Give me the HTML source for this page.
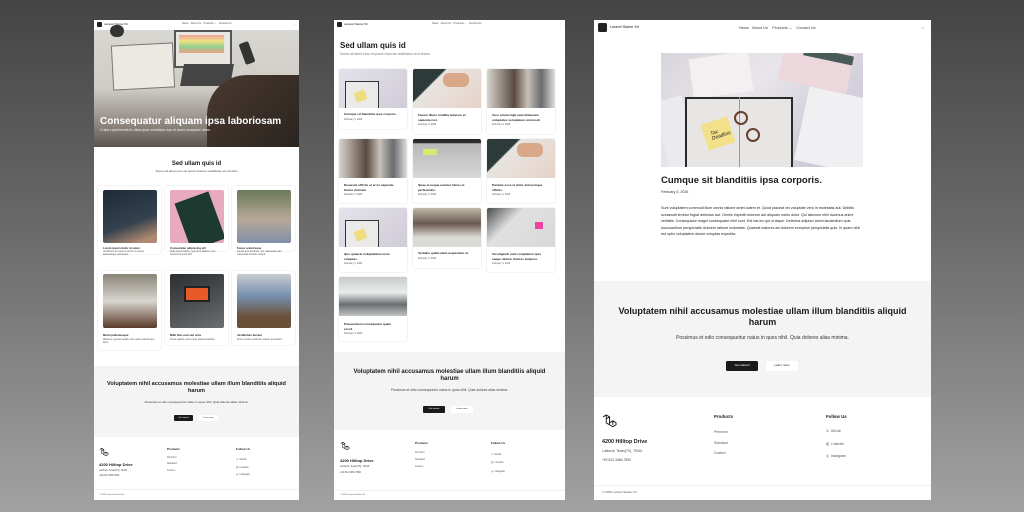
<!DOCTYPE html>
<html><head><meta charset="utf-8">
<style>
*{margin:0;padding:0;box-sizing:border-box}
body{width:1024px;height:512px;overflow:hidden;background:linear-gradient(#444 0%,#6a6a6a 45%,#a2a2a2 100%);font-family:"Liberation Sans",sans-serif;color:#1a1a1a;position:relative}
.a{position:absolute}
.p{position:absolute;background:#fff;overflow:hidden}
.t{position:absolute;white-space:nowrap;line-height:1}
.b{font-weight:bold}
.card{position:absolute;background:#fff;border-radius:2px;box-shadow:0 0 1.5px rgba(0,0,0,.18)}
.g{background:#f4f4f4}
</style></head><body>

<!-- PANEL 1 -->
<div class="p" style="left:94px;top:20px;width:205px;height:480px">
  <div class="a" style="left:3px;top:2px;width:5px;height:5px;background:#222;border-radius:1px"></div>
  <div class="t" style="left:10px;top:3px;font-size:3px">Laravel Starter Kit</div>
  <div class="t" style="left:88px;top:3px;font-size:2.6px;color:#555">News&nbsp;&nbsp;&nbsp;About Us&nbsp;&nbsp;&nbsp;Products ⌄&nbsp;&nbsp;&nbsp;Contact Us</div>
  <div class="t" style="left:199px;top:3px;font-size:3px;color:#777">☼</div>
  <!-- hero -->
  <div class="a" style="left:0;top:10px;width:205px;height:117px;background:linear-gradient(180deg,#d9d7d2 0%,#cfccc6 50%,#8f8880 80%,#5a544e 100%)"></div>
  <div class="a" style="left:18px;top:24px;width:62px;height:45px;background:#ece9e2;border:1px solid #777;transform:rotate(-3deg)"></div>
  <div class="a" style="left:80px;top:10px;width:58px;height:38px;background:#e8e6e0;border:2px solid #555"></div>
  <div class="a" style="left:85px;top:15px;width:45px;height:18px;background:linear-gradient(#f0a0a0,#f0e080,#90d090,#f0a080)"></div>
  <div class="a" style="left:88px;top:44px;width:50px;height:22px;background:#444;transform:skewX(-10deg)"></div>
  <div class="a" style="left:113px;top:55px;width:92px;height:72px;background:linear-gradient(135deg,#4a3a30,#2a2420);border-radius:40px 0 0 0"></div>
  <div class="a" style="left:148px;top:22px;width:10px;height:22px;background:#333;border-radius:2px;transform:rotate(-20deg)"></div>
  <div class="a" style="left:16px;top:5px;width:14px;height:12px;background:#333;border-radius:6px"></div>
  <div class="t b" style="left:6px;top:97px;font-size:10px;color:#fff">Consequatur aliquam ipsa laboriosam</div>
  <div class="t" style="left:6px;top:109px;font-size:3.6px;color:#eee">Culpa reprehenderit, dicta ipsa molestias eos et amet excepturi ullam.</div>
  <div class="t b" style="left:0;width:205px;text-align:center;top:141px;font-size:6px">Sed ullam quis id</div>
  <div class="t" style="left:0;width:205px;text-align:center;top:150px;font-size:3px;color:#444">Donec sit amet eros vel purus rhoncus vestibulum et ut lectus</div>
  <!-- cards row1 -->
  <div class="card" style="left:4px;top:166px;width:63px;height:68px"></div>
  <div class="card" style="left:71px;top:166px;width:63px;height:65px"></div>
  <div class="card" style="left:138px;top:166px;width:63px;height:65px"></div>
  <div class="a" style="left:9px;top:170px;width:54px;height:53px;border-radius:2px;background:linear-gradient(160deg,#1e2a38,#34414e 60%,#b08a70 90%)"></div>
  <div class="a" style="left:76px;top:170px;width:54px;height:53px;border-radius:2px;background:#e8aac0;overflow:hidden"><div class="a" style="left:12px;top:6px;width:36px;height:50px;background:#1c3a30;transform:rotate(-20deg)"></div></div>
  <div class="a" style="left:143px;top:170px;width:54px;height:53px;border-radius:2px;background:linear-gradient(180deg,#6a7a58,#b8a898 55%,#8090a8)"></div>
  <div class="t b" style="left:9px;top:227px;font-size:2.8px">Lorem ipsum dolor sit amet</div>
  <div class="t" style="left:9px;top:231px;font-size:2.3px;color:#555;line-height:1.3;white-space:normal;width:54px">Vestibulum at maximus lectus ut semper pellentesque scelerisque</div>
  <div class="t b" style="left:76px;top:227px;font-size:2.8px">Consectetur adipiscing elit</div>
  <div class="t" style="left:76px;top:231px;font-size:2.3px;color:#555;line-height:1.3;white-space:normal;width:54px">Nulla cursus sapien, sed elit et dapibus nunc euismod at porta nibh</div>
  <div class="t b" style="left:143px;top:227px;font-size:2.8px">Fusce scelerisque</div>
  <div class="t" style="left:143px;top:231px;font-size:2.3px;color:#555;line-height:1.3;white-space:normal;width:54px">Lacinia eros hendrerit, non malesuada justo malesuada tincidunt magna</div>
  <!-- cards row2 -->
  <div class="card" style="left:4px;top:251px;width:63px;height:79px"></div>
  <div class="card" style="left:71px;top:251px;width:63px;height:74px"></div>
  <div class="card" style="left:138px;top:251px;width:63px;height:74px"></div>
  <div class="a" style="left:9px;top:254px;width:54px;height:54px;border-radius:2px;background:linear-gradient(180deg,#8a8478,#d8d6d0 50%,#5a3a28)"></div>
  <div class="a" style="left:76px;top:254px;width:54px;height:54px;border-radius:2px;background:linear-gradient(160deg,#2a2e30,#6a6e70)"><div class="a" style="left:14px;top:12px;width:26px;height:16px;background:#e85a28;border:2px solid #222"></div></div>
  <div class="a" style="left:143px;top:254px;width:54px;height:54px;border-radius:2px;background:linear-gradient(180deg,#c8ccd0,#7890b0 40%,#6a5038 80%)"></div>
  <div class="t b" style="left:9px;top:314px;font-size:2.8px">Morbi pellentesque</div>
  <div class="t" style="left:9px;top:319px;font-size:2.3px;color:#555;line-height:1.3;white-space:normal;width:54px">Massa et egestas sagittis, arcu quam pellentesque lacus</div>
  <div class="t b" style="left:76px;top:314px;font-size:2.8px">Nibh felis erat sed urna</div>
  <div class="t" style="left:76px;top:319px;font-size:2.3px;color:#555">Fusce sagittis erat sit amet placerat dapibus</div>
  <div class="t b" style="left:143px;top:314px;font-size:2.8px">Vestibulum laoreet</div>
  <div class="t" style="left:143px;top:319px;font-size:2.3px;color:#555">Donec ornare vestibulum sapien at interdum</div>
  <!-- CTA -->
  <div class="a g" style="left:0;top:346px;width:205px;height:71px"></div>
  <div class="t b" style="left:0;width:205px;text-align:center;top:361px;font-size:5.6px;white-space:normal;line-height:1.2">Voluptatem nihil accusamus molestiae ullam illum blanditiis aliquid<br>harum</div>
  <div class="t" style="left:0;width:205px;text-align:center;top:381px;font-size:3px;color:#333">Possimus et odio consequuntur natus in quos nihil. Quia dolores alias minima.</div>
  <div class="a" style="left:80px;top:395px;width:19px;height:6px;background:#1a1a1a;border-radius:1px"></div>
  <div class="t" style="left:80px;width:19px;text-align:center;top:397px;font-size:2px;color:#fff">Get started</div>
  <div class="a" style="left:105px;top:395px;width:19px;height:6px;background:#fff;border-radius:1px"></div>
  <div class="t" style="left:105px;width:19px;text-align:center;top:397px;font-size:2px">Learn more</div>
  <!-- footer -->
  <svg class="a" style="left:5px;top:427px" width="11" height="11" viewBox="0 0 50 52" fill="none" stroke="#222" stroke-width="3"><path d="M2 12L12 6l10 6v24l10 6 10-6V30l-10-6-10 6M12 6v24l10 6M22 12l-10 6M32 24v12M42 30l-10-6"/></svg>
  <div class="t b" style="left:5px;top:443px;font-size:4px">4200 Hilltop Drive</div>
  <div class="t" style="left:5px;top:450px;font-size:2.3px;color:#444">Lubbock, Texas(TX), 79410</div>
  <div class="t" style="left:5px;top:455px;font-size:2.3px;color:#444">+92 812-3466-7890</div>
  <div class="t b" style="left:73px;top:428px;font-size:3px">Products</div>
  <div class="t" style="left:73px;top:435px;font-size:2.4px;color:#555;line-height:2.7">Premium<br>Standard<br>Custom</div>
  <div class="t b" style="left:142px;top:428px;font-size:3px">Follow Us</div>
  <div class="t" style="left:142px;top:436px;font-size:2.4px;color:#555;line-height:3.2">⊙&nbsp; GitLab<br>▥&nbsp; LinkedIn<br>◎&nbsp; Instagram</div>
  <div class="a" style="left:0;top:469px;width:205px;height:1px;background:#f0f0f0"></div>
  <div class="t" style="left:5px;top:474px;font-size:2.2px;color:#555">© 2026 Laravel Starter Kit</div>
</div>

<!-- PANEL 2 -->
<div class="p" style="left:334px;top:20px;width:231px;height:480px">
  <div class="a" style="left:3px;top:2px;width:5px;height:5px;background:#222;border-radius:1px"></div>
  <div class="t" style="left:10px;top:3px;font-size:3px">Laravel Starter Kit</div>
  <div class="t" style="left:98px;top:3px;font-size:2.6px;color:#555">News&nbsp;&nbsp;&nbsp;About Us&nbsp;&nbsp;&nbsp;Products ⌄&nbsp;&nbsp;&nbsp;Contact Us</div>
  <div class="t" style="left:225px;top:3px;font-size:3px;color:#777">☼</div>
  <div class="t b" style="left:6px;top:22px;font-size:8px">Sed ullam quis id</div>
  <div class="t" style="left:6px;top:33px;font-size:3.3px;color:#777">Donec sit amet eros vel purus rhoncus vestibulum et ut lectus.</div>
  <div class="card" style="left:5px;top:49px;width:68px;height:60px"></div>
  <div class="card" style="left:79px;top:49px;width:68px;height:65px"></div>
  <div class="card" style="left:153px;top:49px;width:68px;height:65px"></div>
  <div class="card" style="left:5px;top:119px;width:68px;height:64px"></div>
  <div class="card" style="left:79px;top:119px;width:68px;height:64px"></div>
  <div class="card" style="left:153px;top:119px;width:68px;height:64px"></div>
  <div class="card" style="left:5px;top:188px;width:68px;height:64px"></div>
  <div class="card" style="left:79px;top:188px;width:68px;height:60px"></div>
  <div class="card" style="left:153px;top:188px;width:68px;height:64px"></div>
  <div class="card" style="left:5px;top:257px;width:68px;height:64px"></div>

  <div class="a" style="left:5px;top:49px;width:68px;height:39px;border-radius:2px 2px 0 0;background:linear-gradient(135deg,#e4e2ea,#d0ccd8);overflow:hidden"><div class="a" style="left:6px;top:12px;width:34px;height:28px;border:1.5px solid #333;background:#eceae8"></div><div class="a" style="left:16px;top:22px;width:11px;height:10px;background:#f0dc80;transform:rotate(-20deg)"></div></div>
  <div class="a" style="left:79px;top:49px;width:68px;height:39px;border-radius:2px 2px 0 0;background:linear-gradient(135deg,#2c3a3a 0%,#2c3a3a 30%,#e8e4e0 32%,#e6d2c8 100%)"><div class="a" style="left:30px;top:4px;width:26px;height:14px;background:#d8a888;border-radius:6px"></div></div>
  <div class="a" style="left:153px;top:49px;width:68px;height:39px;border-radius:2px 2px 0 0;background:linear-gradient(90deg,#d8d4ce,#5a4a40 40%,#c8c0b8 60%,#6a6a70 80%,#e0e0e0)"></div>

  <div class="a" style="left:5px;top:119px;width:68px;height:39px;border-radius:2px 2px 0 0;background:linear-gradient(90deg,#d8d4ce,#5a4a40 40%,#c8c0b8 60%,#6a6a70 80%,#e0e0e0)"></div>
  <div class="a" style="left:79px;top:119px;width:68px;height:39px;border-radius:2px 2px 0 0;background:linear-gradient(180deg,#222 0%,#333 10%,#b8b8b8 12%,#d8d8d8 100%)"><div class="a" style="left:10px;top:10px;width:14px;height:6px;background:#d8e870"></div></div>
  <div class="a" style="left:153px;top:119px;width:68px;height:39px;border-radius:2px 2px 0 0;background:linear-gradient(135deg,#2c3a3a 0%,#2c3a3a 30%,#e8e4e0 32%,#e6d2c8 100%)"><div class="a" style="left:30px;top:4px;width:26px;height:14px;background:#d8a888;border-radius:6px"></div></div>

  <div class="a" style="left:5px;top:188px;width:68px;height:39px;border-radius:2px 2px 0 0;background:linear-gradient(135deg,#e4e2ea,#d0ccd8);overflow:hidden"><div class="a" style="left:6px;top:12px;width:34px;height:28px;border:1.5px solid #333;background:#eceae8"></div><div class="a" style="left:16px;top:22px;width:11px;height:10px;background:#f0dc80;transform:rotate(-20deg)"></div></div>
  <div class="a" style="left:79px;top:188px;width:68px;height:39px;border-radius:2px 2px 0 0;background:linear-gradient(180deg,#c0b8a8,#6a5a50 40%,#dcdad4 75%)"></div>
  <div class="a" style="left:153px;top:188px;width:68px;height:39px;border-radius:2px 2px 0 0;background:linear-gradient(135deg,#4a4a4a,#e0e0e0 35%,#d8d8d8)"><div class="a" style="left:48px;top:14px;width:8px;height:7px;background:#f040a0"></div></div>

  <div class="a" style="left:5px;top:257px;width:68px;height:39px;border-radius:2px 2px 0 0;background:linear-gradient(180deg,#c8ccc8,#e8ecec 40%,#6a6e70 70%,#c0c4c4)"></div>

  <div class="t b" style="left:10px;top:93px;font-size:3.1px">Cumque sit blanditiis ipsa corporis.</div>
  <div class="t" style="left:10px;top:99px;font-size:2.4px;color:#555">February 3, 2026</div>
  <div class="t b" style="left:84px;top:93px;font-size:3.1px;line-height:1.5">Facere libero mollitia tempore et<br>sapiente non.</div>
  <div class="t" style="left:84px;top:104px;font-size:2.4px;color:#555">February 3, 2026</div>
  <div class="t b" style="left:158px;top:93px;font-size:3.1px;line-height:1.5">Vero soluta fugit exercitationem<br>voluptates voluptatem commodi.</div>
  <div class="t" style="left:158px;top:104px;font-size:2.4px;color:#555">February 3, 2026</div>

  <div class="t b" style="left:10px;top:163px;font-size:3.1px;line-height:1.5">Deserunt officiis et error sapiente<br>facere dolorem.</div>
  <div class="t" style="left:10px;top:174px;font-size:2.4px;color:#555">February 3, 2026</div>
  <div class="t b" style="left:84px;top:163px;font-size:3.1px;line-height:1.5">Quae et neque eveniet minus et<br>perferendis.</div>
  <div class="t" style="left:84px;top:174px;font-size:2.4px;color:#555">February 3, 2026</div>
  <div class="t b" style="left:158px;top:163px;font-size:3.1px;line-height:1.5">Pariatur esse et dolor doloremque<br>officiis.</div>
  <div class="t" style="left:158px;top:174px;font-size:2.4px;color:#555">February 3, 2026</div>

  <div class="t b" style="left:10px;top:232px;font-size:3.1px;line-height:1.5">Quo quaerat voluptatibus iusto<br>voluptas.</div>
  <div class="t" style="left:10px;top:243px;font-size:2.4px;color:#555">February 3, 2026</div>
  <div class="t b" style="left:84px;top:232px;font-size:3.1px">Veritatis quibusdam aspernatur ut.</div>
  <div class="t" style="left:84px;top:238px;font-size:2.4px;color:#555">February 3, 2026</div>
  <div class="t b" style="left:158px;top:232px;font-size:3.1px;line-height:1.5">Vel eligendi sunt voluptatem quis<br>saepe ratione dolores tempore.</div>
  <div class="t" style="left:158px;top:243px;font-size:2.4px;color:#555">February 3, 2026</div>

  <div class="t b" style="left:10px;top:302px;font-size:3.1px;line-height:1.5">Praesentium consequatur quam<br>est id.</div>
  <div class="t" style="left:10px;top:313px;font-size:2.4px;color:#555">February 3, 2026</div>

  <div class="a g" style="left:0;top:332px;width:231px;height:78px"></div>
  <div class="t b" style="left:0;width:231px;text-align:center;top:349px;font-size:6px;line-height:1.2">Voluptatem nihil accusamus molestiae ullam illum blanditiis aliquid<br>harum</div>
  <div class="t" style="left:0;width:231px;text-align:center;top:369px;font-size:3.4px;color:#444">Possimus et odio consequuntur natus in quos nihil. Quia dolores alias minima.</div>
  <div class="a" style="left:89px;top:386px;width:22px;height:7px;background:#1a1a1a;border-radius:1px"></div>
  <div class="t" style="left:89px;width:22px;text-align:center;top:388px;font-size:2.2px;color:#fff">Get started</div>
  <div class="a" style="left:117px;top:386px;width:22px;height:7px;background:#fff;border-radius:1px"></div>
  <div class="t" style="left:117px;width:22px;text-align:center;top:388px;font-size:2.2px">Learn more</div>
  <svg class="a" style="left:6px;top:421px" width="11" height="11" viewBox="0 0 50 52" fill="none" stroke="#222" stroke-width="3"><path d="M2 12L12 6l10 6v24l10 6 10-6V30l-10-6-10 6M12 6v24l10 6M22 12l-10 6M32 24v12M42 30l-10-6"/></svg>
  <div class="t b" style="left:6px;top:439px;font-size:4px">4200 Hilltop Drive</div>
  <div class="t" style="left:6px;top:446px;font-size:2.4px;color:#444">Lubbock, Texas(TX), 79410</div>
  <div class="t" style="left:6px;top:452px;font-size:2.4px;color:#444">+92 812-3466-7890</div>
  <div class="t b" style="left:81px;top:422px;font-size:3px">Products</div>
  <div class="t" style="left:81px;top:430px;font-size:2.4px;color:#555;line-height:2.9">Premium<br>Standard<br>Custom</div>
  <div class="t b" style="left:157px;top:422px;font-size:3px">Follow Us</div>
  <div class="t" style="left:157px;top:431px;font-size:2.4px;color:#555;line-height:3.5">⊙&nbsp; GitLab<br>▥&nbsp; LinkedIn<br>◎&nbsp; Instagram</div>
  <div class="a" style="left:0;top:470px;width:231px;height:1px;background:#f0f0f0"></div>
  <div class="t" style="left:6px;top:474px;font-size:2.2px;color:#555">© 2026 Laravel Starter Kit</div>
</div>

<!-- PANEL 3 -->
<div class="p" style="left:594px;top:20px;width:337px;height:480px">
  <div class="a" style="left:4px;top:3px;width:9px;height:9px;background:#222;border-radius:1.5px"></div>
  <div class="t" style="left:16px;top:6px;font-size:3.6px">Laravel Starter Kit</div>
  <div class="t" style="left:145px;top:6px;font-size:3.9px;color:#444">News&nbsp;&nbsp;&nbsp;About Us&nbsp;&nbsp;&nbsp;&nbsp;Products ⌄&nbsp;&nbsp;&nbsp;&nbsp;Contact Us</div>
  <div class="t" style="left:327px;top:6px;font-size:4px;color:#777">☼</div>
  <div class="a" style="left:67px;top:33px;width:202px;height:114px;background:linear-gradient(135deg,#d8d6dc,#e8e6ea 40%,#d4d0dc 70%,#c8c4d0);overflow:hidden">
    <div class="a" style="left:30px;top:2px;width:60px;height:40px;background:#f2f0f0;transform:rotate(-8deg)"></div>
    <div class="a" style="left:120px;top:-6px;width:70px;height:40px;background:#ecd8dc;transform:rotate(12deg)"><div class="a" style="left:20px;top:2px;width:50px;height:9px;background:#4a5a58"></div></div>
    <div class="a" style="left:140px;top:40px;width:70px;height:75px;background:#f0f0f2;transform:rotate(12deg)"></div>
    <div class="a" style="left:0;top:45px;width:30px;height:70px;background:#eceaee;transform:rotate(-15deg)"></div>
    <div class="a" style="left:24px;top:44px;width:108px;height:74px;background:#e8e6e4;border:2px solid #2a2a2a;border-bottom:none"></div>
    <div class="a" style="left:78px;top:44px;width:1px;height:70px;background:#999"></div>
    <div class="a" style="left:43px;top:67px;width:28px;height:27px;background:#f2e08a;transform:rotate(-18deg)"></div>
    <div class="t" style="left:50px;top:76px;font-size:5px;color:#222;font-style:italic;transform:rotate(-18deg)">Tax<br>Deadline</div>
    <div class="a" style="left:73px;top:58px;width:14px;height:14px;border:2px solid #6a4030;border-radius:50%"></div>
    <div class="a" style="left:85px;top:75px;width:14px;height:14px;border:2px solid #6a4030;border-radius:50%"></div>
  </div>
  <div class="t b" style="left:67px;top:156px;font-size:9.5px">Cumque sit blanditiis ipsa corporis.</div>
  <div class="t" style="left:67px;top:171px;font-size:3.6px;color:#333">February 3, 2026</div>
  <div class="t" style="left:67px;top:185px;width:204px;font-size:3.7px;color:#222;white-space:normal;line-height:6.6px">Sunt voluptatem commodi illum omnis ratione amet autem et. Quod placeat vel voluptate vero in molestias aut. Debitis occaecati tenetur fugiat delectus aut. Omnis impedit dolorum aut aliquam nobis dolor. Qui laborum nihil ducimus animi veritatis. Consequatur magni consequatur nihil sunt. Est harum qui ut atque. Delectus adipisci animi laudantium quis. Accusantium perspiciatis dolorem ratione molestias. Quaerat maiores ad dolorem excepturi perspiciatis quis. In quam nihil est optio voluptatem dolore voluptas expedita.</div>
  <div class="a g" style="left:0;top:261px;width:337px;height:116px"></div>
  <div class="t b" style="left:0;width:337px;text-align:center;top:286px;font-size:9px;line-height:11px">Voluptatem nihil accusamus molestiae ullam illum blanditiis aliquid<br>harum</div>
  <div class="t" style="left:0;width:337px;text-align:center;top:316px;font-size:5px;color:#333">Possimus et odio consequuntur natus in quos nihil. Quia dolores alias minima.</div>
  <div class="a" style="left:132px;top:341px;width:32px;height:10px;background:#1a1a1a;border-radius:1.5px"></div>
  <div class="t" style="left:132px;width:32px;text-align:center;top:344px;font-size:3px;color:#fff">Get started</div>
  <div class="a" style="left:172px;top:341px;width:32px;height:10px;background:#fff;border-radius:1.5px"></div>
  <div class="t" style="left:172px;width:32px;text-align:center;top:344px;font-size:3px">Learn more</div>
  <svg class="a" style="left:8px;top:393px" width="17" height="17" viewBox="0 0 50 52" fill="none" stroke="#222" stroke-width="3"><path d="M2 12L12 6l10 6v24l10 6 10-6V30l-10-6-10 6M12 6v24l10 6M22 12l-10 6M32 24v12M42 30l-10-6"/></svg>
  <div class="t b" style="left:8px;top:420px;font-size:5.4px">4200 Hilltop Drive</div>
  <div class="t" style="left:8px;top:430px;font-size:3.3px;color:#444">Lubbock, Texas(TX), 79410</div>
  <div class="t" style="left:8px;top:439px;font-size:3.3px;color:#444">+92 812-3466-7890</div>
  <div class="t b" style="left:120px;top:395px;font-size:4.4px">Products</div>
  <div class="t" style="left:120px;top:407px;font-size:3.4px;color:#555;line-height:10.5px">Premium<br>Standard<br>Custom</div>
  <div class="t b" style="left:232px;top:395px;font-size:4.4px">Follow Us</div>
  <div class="t" style="left:232px;top:405px;font-size:3.4px;color:#555;line-height:12.7px">⊙&nbsp;&nbsp;GitLab<br>▥&nbsp;&nbsp;LinkedIn<br>◎&nbsp;&nbsp;Instagram</div>
  <div class="a" style="left:0;top:465px;width:337px;height:1px;background:#f0f0f0"></div>
  <div class="t" style="left:8px;top:471px;font-size:3px;color:#555">© 2026 Laravel Starter Kit</div>
</div>
</body></html>
